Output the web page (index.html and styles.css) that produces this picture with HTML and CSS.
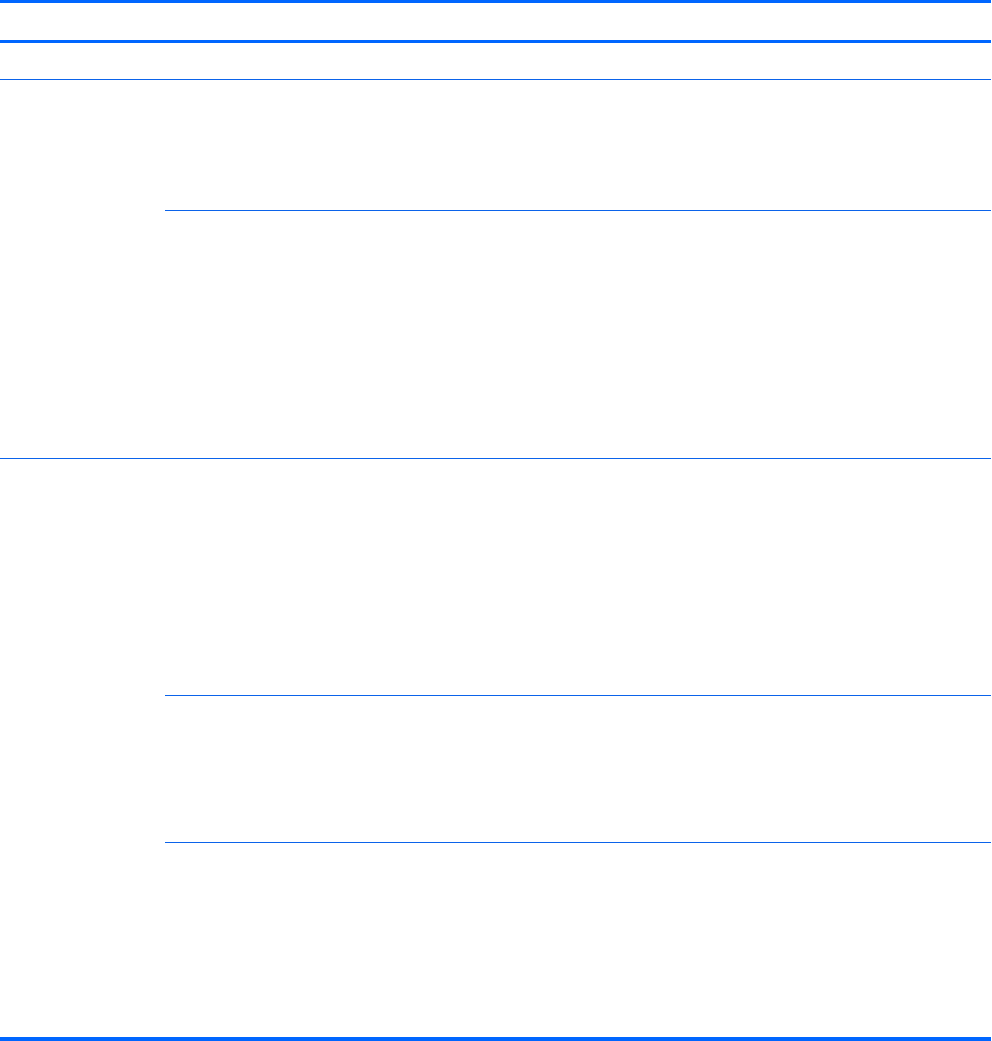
FILE: index.html
```html
<!DOCTYPE html>
<html lang="en">
<head>
  <meta charset="UTF-8">
  <meta name="viewport" content="width=device-width, initial-scale=1.0">
  <title>Specifications</title>
  <link rel="stylesheet" href="styles.css">
</head>
<body>
  <div class="sheet">
    <div class="sheet-head"></div>

    <div class="row-title"></div>

    <div class="group">
      <div class="group-label"></div>
      <div class="group-rows">
        <div class="cell h-130"></div>
        <div class="cell h-247"></div>
      </div>
    </div>

    <div class="group last">
      <div class="group-label"></div>
      <div class="group-rows">
        <div class="cell h-236"></div>
        <div class="cell h-146"></div>
        <div class="cell h-194"></div>
      </div>
    </div>
  </div>
</body>
</html>
```

FILE: styles.css
```css
* {
  margin: 0;
  padding: 0;
  box-sizing: border-box;
}

body {
  font-family: 'Liberation Sans', Arial, sans-serif;
  background: #ffffff;
  color: #000000;
}

.sheet {
  width: 991px;
  border-top: 3px solid #0066ff;
  border-bottom: 4px solid #0066ff;
}

.sheet-head {
  height: 40px;
  border-bottom: 3px solid #0066ff;
}

.row-title {
  height: 37px;
  border-bottom: 1px solid #0b63ea;
}

.group {
  display: flex;
  border-bottom: 1px solid #0b63ea;
}

.group.last {
  border-bottom: none;
}

.group-label {
  width: 165px;
  flex-shrink: 0;
}

.group-rows {
  flex: 1;
  display: flex;
  flex-direction: column;
}

.cell + .cell {
  border-top: 1px solid #0b63ea;
}

.h-130 { height: 130px; }
.h-247 { height: 248px; }
.h-236 { height: 236px; }
.h-146 { height: 147px; }
.h-194 { height: 195px; }
```
